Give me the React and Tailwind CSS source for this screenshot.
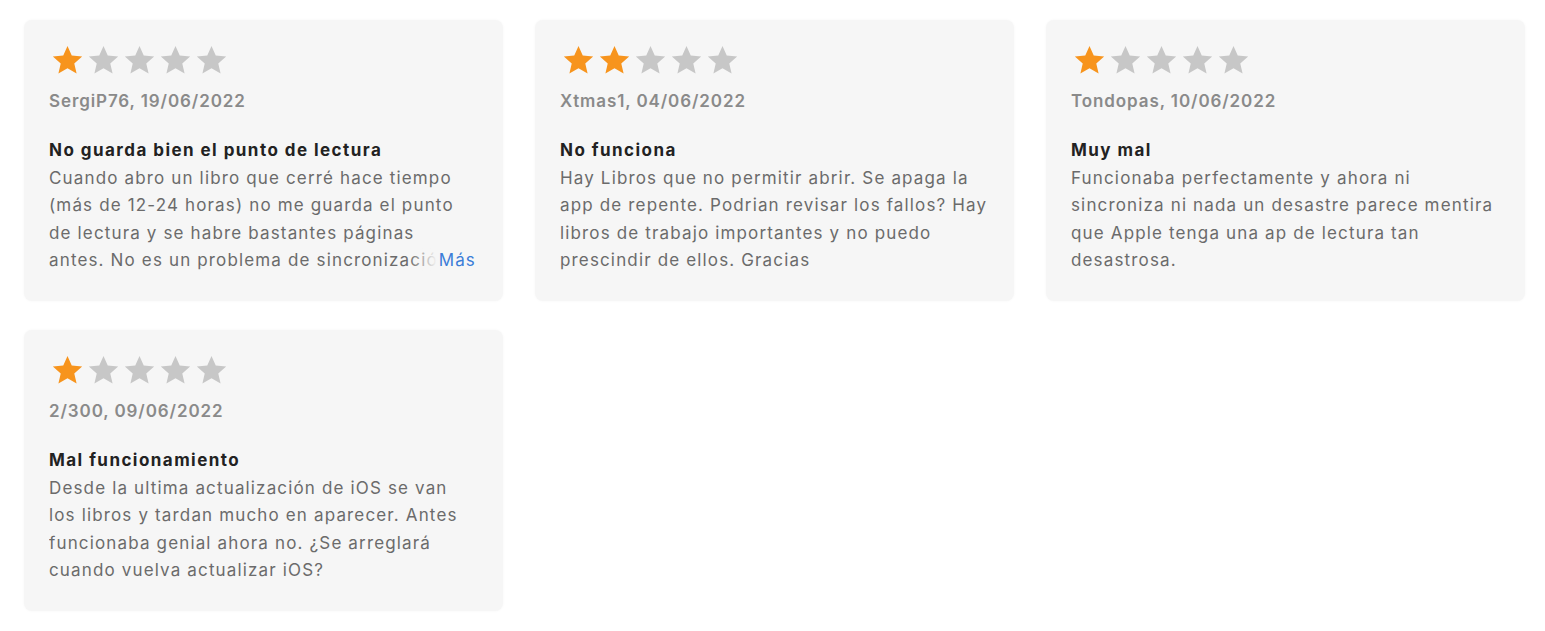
const REVIEWS = [
  {
    rating: 1,
    author: 'SergiP76, 19/06/2022',
    title: 'No guarda bien el punto de lectura',
    body: 'Cuando abro un libro que cerré hace tiempo (más de 12-24 horas) no me guarda el punto de lectura y se habre bastantes páginas antes. No es un problema de sincronización, porque me pasa también con libros que solo tengo en este dispositivo.',
    more: true,
  },
  {
    rating: 2,
    author: 'Xtmas1, 04/06/2022',
    title: 'No funciona',
    body: 'Hay Libros que no permitir abrir. Se apaga la app de repente. Podrian revisar los fallos? Hay libros de trabajo importantes y no puedo prescindir de ellos. Gracias',
  },
  {
    rating: 1,
    author: 'Tondopas, 10/06/2022',
    title: 'Muy mal',
    body: 'Funcionaba perfectamente y ahora ni sincroniza ni nada un desastre parece mentira que Apple tenga una ap de lectura tan desastrosa.',
  },
  {
    rating: 1,
    author: '2/300, 09/06/2022',
    title: 'Mal funcionamiento',
    body: 'Desde la ultima actualización de iOS se van los libros y tardan mucho en aparecer. Antes funcionaba genial ahora no. ¿Se arreglará cuando vuelva actualizar iOS?',
  },
]

// ── Stars ────────────────────────────────────────────────────
function Star({ filled }) {
  return (
    <svg
      viewBox="0 0 24 24"
      className={`h-[37px] w-[37px] -mx-[0.5px] ${filled ? 'text-[#f7941d]' : 'text-[#c7c7c7]'}`}
      fill="currentColor"
    >
      <path d="M12 2.6l2.75 6.2 6.75.62-5.1 4.48 1.5 6.6L12 17.05 6.1 20.5l1.5-6.6-5.1-4.48 6.75-.62z" />
    </svg>
  )
}

function Stars({ rating }) {
  return (
    <div className="flex h-[33px] items-center">
      {[1, 2, 3, 4, 5].map((n) => (
        <Star key={n} filled={n <= rating} />
      ))}
    </div>
  )
}

// ── Review Card ──────────────────────────────────────────────
function ReviewCard({ review }) {
  return (
    <div className="h-[281px] rounded-lg bg-[#f6f6f6] px-[25px] pt-[24px] shadow-[0_0_3px_rgba(0,0,0,0.04)]">
      <Stars rating={review.rating} />
      <p className="mt-[12px] text-[17px] leading-6 font-semibold tracking-[0.9px] text-[#8a8a8a]">{review.author}</p>
      <h3 className="mt-[24px] text-[17px] leading-[27.5px] font-bold tracking-[1.45px] text-[#222]">{review.title}</h3>
      <div className="relative">
        <p className={`line-clamp-4 text-[17px] leading-[27.5px] tracking-[1.15px] text-[#6b6b6b] ${review.more ? 'pr-[10px]' : ''}`}>
          {review.body}
        </p>
        {review.more && (
          <span className="absolute bottom-0 right-0 flex">
            <span className="w-[28px] bg-gradient-to-r from-transparent to-[#f6f6f6]" />
            <span className="bg-[#f6f6f6] pl-[2px] pr-[2px] text-[17px] leading-[27.5px] tracking-[1.15px] text-[#3b7dd8]">Más</span>
          </span>
        )}
      </div>
    </div>
  )
}

export default function App() {
  return (
    <div className="min-h-screen bg-white pl-[24px] pr-[20px] pt-[20px] font-['Inter',sans-serif] antialiased">
      <div className="grid grid-cols-3 gap-x-[32px] gap-y-[29px]">
        {REVIEWS.map((r) => (
          <ReviewCard key={r.author} review={r} />
        ))}
      </div>
    </div>
  )
}
